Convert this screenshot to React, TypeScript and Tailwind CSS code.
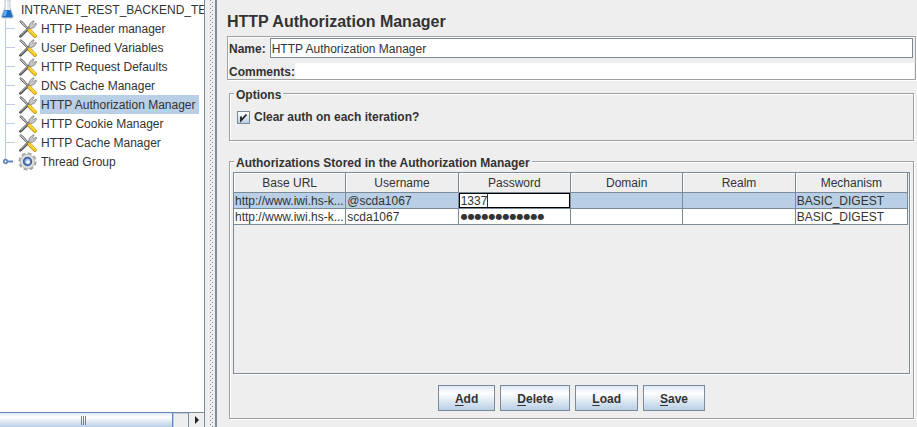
import React from "react";

const managers = [
  "HTTP Header manager",
  "User Defined Variables",
  "HTTP Request Defaults",
  "DNS Cache Manager",
  "HTTP Authorization Manager",
  "HTTP Cookie Manager",
  "HTTP Cache Manager",
];

const columns = ["Base URL", "Username", "Password", "Domain", "Realm", "Mechanism"];

const etched = "border border-[#a0a0a0] shadow-[1px_1px_0_#fff,inset_1px_1px_0_#fff]";

function FlaskIcon() {
  return (
    <svg className="h-[19px] w-[14px] shrink-0" viewBox="0 0 14 19" aria-hidden="true">
      <path d="M5 0v7L1.400 16.200q-.4 1.800 1.400 1.800h9q1.800 0 1.400-1.800L10 7V0z" fill="#e6ebf0" stroke="#b4bcc4" strokeWidth=".8" />
      <path d="M4.500 10h6l2.200 6.300q.3 1.100-.9 1.100H3q-1.200 0-.9-1.100z" fill="#1d6fc9" />
      <path d="M5 10.600h2.300L5.600 16H3z" fill="#63b0f2" />
      <path d="M6.500 0v9" stroke="#fff" />
    </svg>
  );
}

function ToolsIcon() {
  return (
    <svg className="h-[18px] w-[18px] shrink-0" viewBox="0 0 18 18" aria-hidden="true">
      <path d="M1.400 16.400 11 7" stroke="#4e4e4e" strokeWidth="2.600" strokeLinecap="round" />
      <path d="M1.600 15.700 11 6.500" stroke="#bdbdbd" strokeWidth="1" />
      <path d="M9.800 8 10.500 4 14 .8l1.200.3-1.400 2.400 1 1L17 3l.6 1.200-2.300 3.200-3.800 1.400z" fill="#c4c4c4" stroke="#6a6a6a" strokeWidth=".6" />
      <path d="m.8 1.600 1-.9L4.400 2.600l4.200 4.900-.9.900L2.900 4z" fill="#c9c9c9" stroke="#4a4a4a" strokeWidth=".8" />
      <path d="m10.400 10.400 5.500 5.600" stroke="#a98412" strokeWidth="3.800" strokeLinecap="round" />
      <path d="m10.400 10.200 5.500 5.600" stroke="#f7c91f" strokeWidth="3" strokeLinecap="round" />
      <path d="m11 10 4.900 4.900" stroke="#ffe57a" strokeWidth=".8" />
    </svg>
  );
}

function GearIcon() {
  return (
    <svg className="h-[19px] w-[19px] shrink-0" viewBox="0 0 19 19" aria-hidden="true">
      <circle cx="9.500" cy="9.500" r="7.900" fill="none" stroke="#a4a4a4" strokeWidth="2.400" strokeDasharray="3.800 2.400" />
      <circle cx="9.500" cy="9.500" r="7.200" fill="#dedede" stroke="#b0b0b0" strokeWidth=".8" />
      <circle cx="9.500" cy="9.500" r="3.800" fill="#9dbbe6" stroke="#41639f" strokeWidth="1.800" />
      <circle cx="10" cy="10" r="1.800" fill="#f4f8ff" />
    </svg>
  );
}

function Tree() {
  return (
    <ul className="min-h-0 flex-1 overflow-hidden bg-white whitespace-nowrap">
      <li className="flex h-[19px] items-center">
        <FlaskIcon />
        <span className="pl-[7px]">INTRANET_REST_BACKEND_TE</span>
      </li>
      {managers.map((name) => (
        <li key={name} className="ml-[5px] flex h-[19px] items-center border-l border-[#b8cfe5]">
          <span className="h-px w-[9px] bg-[#b8cfe5]" />
          <span className="pl-1">
            <ToolsIcon />
          </span>
          <span
            className={
              name === "HTTP Authorization Manager"
                ? "ml-[3px] h-[19px] bg-[#b8cfe5] pt-px pr-[3px] pl-px leading-[18px]"
                : "ml-[3px] h-[19px] pt-px pl-px leading-[18px]"
            }
          >
            {name}
          </span>
        </li>
      ))}
      <li className="ml-[3px] flex h-[19px] items-center">
        <button type="button" aria-label="Expand Thread Group" className="h-[19px] w-3">
          <svg className="h-[19px] w-3" viewBox="0 0 12 19" aria-hidden="true">
            <path d="M2.500 0v7" stroke="#b8cfe5" />
            <path d="M5 9.500h5" stroke="#6382bf" strokeWidth="2" />
            <circle cx="2.500" cy="9.500" r="1.800" fill="#fff" stroke="#6382bf" strokeWidth="1.700" />
          </svg>
        </button>
        <span className="pl-[3px]">
          <GearIcon />
        </span>
        <span className="pl-1">Thread Group</span>
      </li>
    </ul>
  );
}

function ScrollBar() {
  return (
    <div className="flex h-[15px] shrink-0 border-t border-[#7a8a99] bg-[#eee]">
      <div className="-mt-px flex w-[173px] items-center justify-center gap-px border-t border-r border-[#6382bf] bg-linear-to-b from-[#dde8f3] via-white via-30% to-[#b8cfe5] pr-[6px]">
        <span className="h-[9px] w-px bg-[#6382bf]" />
        <span className="h-[9px] w-px bg-[#6382bf]" />
        <span className="h-[9px] w-px bg-[#6382bf]" />
      </div>
      <div className="flex-1 border-t border-l border-[#b8cfe5]" />
      <button type="button" aria-label="Scroll right" className="flex w-4 items-center border-l border-[#7a8a99] pl-[6px]">
        <svg className="h-2 w-1" viewBox="0 0 4 8" aria-hidden="true">
          <path d="M0 0 4 4 0 8z" fill="#222" />
        </svg>
      </button>
    </div>
  );
}

function Splitter() {
  return (
    <div className="flex w-[10px] shrink-0 bg-[#eee] pl-[5px]">
      <div className="w-[3px] bg-[conic-gradient(from_270deg_at_1px_1px,#7a8a99_90deg,transparent_0),conic-gradient(from_270deg_at_1px_1px,#7a8a99_90deg,transparent_0)] [background-position:0_0,2px_2px] [background-size:4px_4px]" />
    </div>
  );
}

function Cell({ children }: { children?: React.ReactNode }) {
  return (
    <td className="h-4 overflow-hidden border border-[#7a8a99] p-0 pt-px pl-px leading-[14px] whitespace-nowrap">
      {children}
    </td>
  );
}

function AuthTable() {
  return (
    <div className="min-h-0 flex-1 border border-[#7a8a99] shadow-[1px_1px_0_#fff]">
      <table className="-mt-px -ml-px w-full table-fixed border-collapse">
        <thead>
          <tr>
            {columns.map((c) => (
              <th
                key={c}
                className="h-5 border border-[#7a8a99] p-0 pt-[2px] text-center leading-[17px] font-normal shadow-[inset_1px_1px_0_#fff]"
              >
                {c}
              </th>
            ))}
          </tr>
        </thead>
        <tbody>
          <tr className="bg-[#b8cfe5]">
            <Cell>http://www.iwi.hs-k...</Cell>
            <Cell>@scda1067</Cell>
            <td className="h-4 border border-[#7a8a99] p-0">
              <div className="flex h-[15px] items-center border border-black bg-white pl-px">
                <input aria-label="Password" defaultValue="1337" className="field-sizing-content h-[13px] outline-none" />
                <span className="h-[13px] w-px bg-[#333]" />
              </div>
            </td>
            <Cell />
            <Cell />
            <Cell>BASIC_DIGEST</Cell>
          </tr>
          <tr className="bg-white">
            <Cell>http://www.iwi.hs-k...</Cell>
            <Cell>scda1067</Cell>
            <Cell>
              <span className="block pl-px font-['DejaVu_Sans',sans-serif] text-[8px] leading-[14px]">●●●●●●●●●●●●</span>
            </Cell>
            <Cell />
            <Cell />
            <Cell>BASIC_DIGEST</Cell>
          </tr>
        </tbody>
      </table>
    </div>
  );
}

function ActionButton({ label }: { label: string }) {
  return (
    <button
      type="button"
      className="h-[26px] border border-[#7a8a99] bg-linear-to-b from-[#dde8f3] via-white via-30% to-[#b8cfe5] px-4 pt-px font-bold"
    >
      <span className="underline underline-offset-2">{label[0]}</span>
      {label.slice(1)}
    </button>
  );
}

export default function App() {
  return (
    <div className="flex h-screen overflow-hidden bg-[#eee] font-['Liberation_Sans',Arial,sans-serif] text-[12px] text-[#333]">
      <aside className="flex w-[205px] shrink-0 flex-col border-r border-[#7a8a99]">
        <Tree />
        <ScrollBar />
      </aside>
      <Splitter />
      <main className="flex min-w-0 flex-1 flex-col border-l-2 border-[#7a8a99] pb-2 pl-[10px]">
        <h1 className="mt-3 text-[16px] leading-5 font-bold">HTTP Authorization Manager</h1>
        <div className={`mt-1 mr-px flex flex-col gap-[5px] px-px pt-px ${etched}`}>
          <div className="flex h-5 items-center">
            <label htmlFor="name" className="pt-px pr-1 font-bold">
              Name:
            </label>
            <input
              id="name"
              defaultValue="HTTP Authorization Manager"
              className="mr-px h-5 min-w-0 flex-1 border border-[#7a8a99] bg-white pt-px pl-px outline-none"
            />
          </div>
          <div className="flex h-4 items-center">
            <label htmlFor="comments" className="pt-px font-bold">
              Comments:
            </label>
            <input id="comments" className="h-4 min-w-0 flex-1 bg-white outline-none" />
          </div>
        </div>
        <fieldset className={`mt-[6px] mr-[3px] ml-[2px] h-[55px] px-[7px] ${etched}`}>
          <legend className="-ml-[3px] bg-[#eee] px-[2px] pt-[3px] leading-3 font-bold">Options</legend>
          <label className="flex items-center gap-1 pt-[6px] leading-5 font-bold">
            <span className="grid h-[13px] w-[13px]">
              <input
                type="checkbox"
                defaultChecked
                className="col-start-1 row-start-1 h-[13px] w-[13px] appearance-none border border-[#7a8a99] bg-linear-to-b from-white to-[#b8cfe5]"
              />
              <svg className="pointer-events-none col-start-1 row-start-1 h-[13px] w-[13px]" viewBox="0 0 13 13" aria-hidden="true">
                <path d="M4 5.500v4L9.500 3.500" fill="none" stroke="#222" strokeWidth="1.800" />
              </svg>
            </span>
            Clear auth on each iteration?
          </label>
        </fieldset>
        <fieldset className={`mt-[13px] mr-[3px] ml-[2px] min-h-0 flex-1 px-[3px] pb-[7px] ${etched}`}>
          <legend className="ml-px bg-[#eee] px-[2px] pt-[3px] leading-3 font-bold">
            Authorizations Stored in the Authorization Manager
          </legend>
          <div className="flex h-full flex-col pt-[3px]">
            <AuthTable />
            <div className="mt-[11px] flex shrink-0 justify-center gap-[5px]">
              <ActionButton label="Add" />
              <ActionButton label="Delete" />
              <ActionButton label="Load" />
              <ActionButton label="Save" />
            </div>
          </div>
        </fieldset>
      </main>
    </div>
  );
}
